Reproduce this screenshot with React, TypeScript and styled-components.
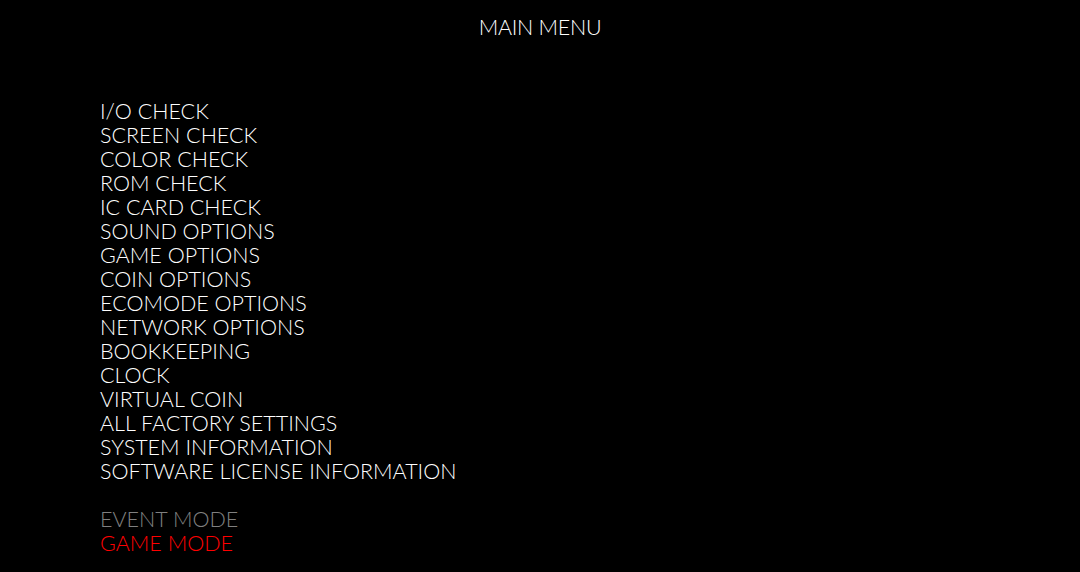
import React from "react";
import styled, { createGlobalStyle } from "styled-components";

const Global = createGlobalStyle`
  html, body { margin: 0; padding: 0; background: #000; }
  body { width: 1080px; height: 572px; overflow: hidden; }
`;

const Screen = styled.div`
  width: 1080px;
  height: 572px;
  background: #000;
  color: #fff;
  font-family: "Lato", "DejaVu Sans", sans-serif;
  font-weight: 300;
  font-size: 21.5px;
  line-height: 24px;
  display: flex;
  flex-direction: column;
`;

const Title = styled.div`
  text-align: center;
  padding-top: 15px;
  letter-spacing: -0.3px;
`;

const Menu = styled.ul`
  list-style: none;
  margin: 0;
  padding: 60px 0 0 100px;
  display: flex;
  flex-direction: column;
`;

const Item = styled.li<{ $tone?: "normal" | "dim" | "active"; $gap?: boolean }>`
  color: ${(p) => (p.$tone === "dim" ? "#808080" : p.$tone === "active" ? "#ff0000" : "#fff")};
  margin-top: ${(p) => (p.$gap ? "24px" : "0")};
  height: 24px;
  white-space: nowrap;
`;

const items = [
  "I/O CHECK",
  "SCREEN CHECK",
  "COLOR CHECK",
  "ROM CHECK",
  "IC CARD CHECK",
  "SOUND OPTIONS",
  "GAME OPTIONS",
  "COIN OPTIONS",
  "ECOMODE OPTIONS",
  "NETWORK OPTIONS",
  "BOOKKEEPING",
  "CLOCK",
  "VIRTUAL COIN",
  "ALL FACTORY SETTINGS",
  "SYSTEM INFORMATION",
  "SOFTWARE LICENSE INFORMATION",
];

export default function App() {
  return (
    <Screen>
      <Global />
      <Title>MAIN MENU</Title>
      <Menu>
        {items.map((t) => (
          <Item key={t}>{t}</Item>
        ))}
        <Item $tone="dim" $gap>EVENT MODE</Item>
        <Item $tone="active">GAME MODE</Item>
      </Menu>
    </Screen>
  );
}
